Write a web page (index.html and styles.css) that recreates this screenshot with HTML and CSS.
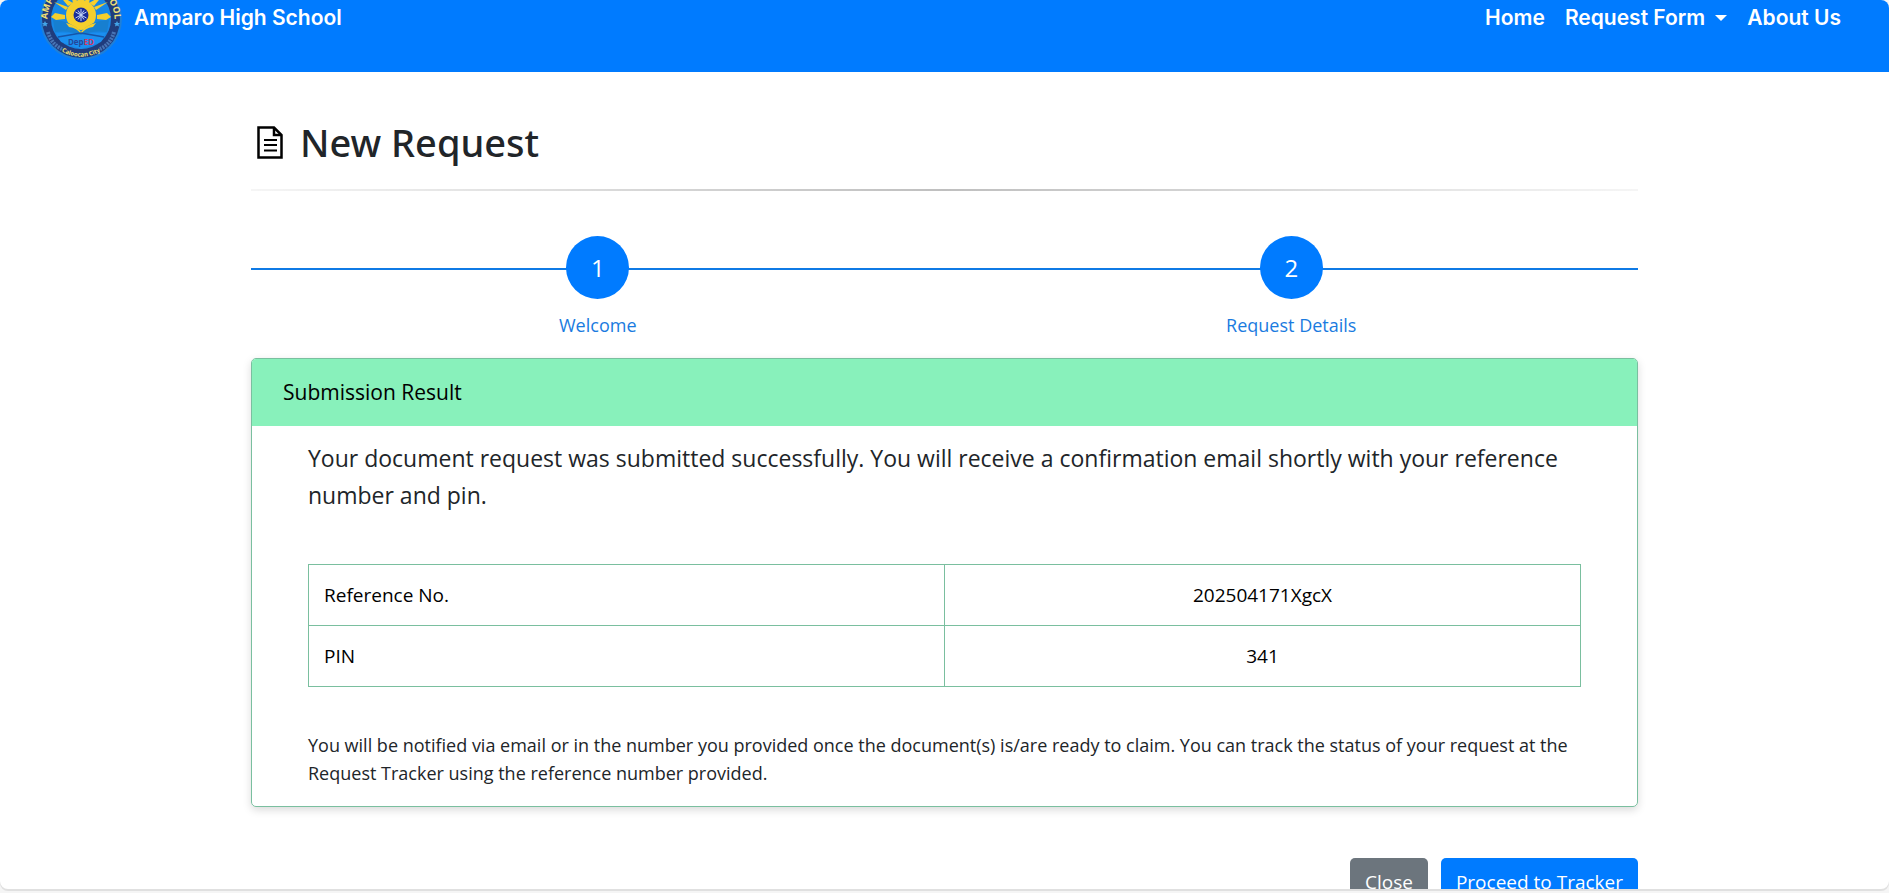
FILE: index.html
```html
<!DOCTYPE html>
<html lang="en">
<head>
<meta charset="utf-8">
<title>New Request - Amparo High School</title>
<link rel="stylesheet" href="styles.css">
</head>
<body>
<div class="window">
  <header class="navbar">
    <a class="brand" href="#">
      <svg class="brand-logo" viewBox="0 0 84 84" aria-hidden="true">
        <defs>
          <path id="ring-top" d="M9.500 51.500 A33.500 33.500 0 1 1 74.500 51.500"/>
          <path id="ring-bottom" d="M12 66 A38 38 0 0 0 72 66"/>
        </defs>
        <circle cx="42" cy="43" r="41" fill="#1f80d8"/>
        <circle cx="42" cy="43" r="39" fill="#203c7c"/>
        <circle cx="42" cy="43" r="30" fill="#1787e6"/>
        <g fill="#f6cf2c">
          <path d="M39 25 42 11 45 25ZM34 27 31 14 38 25ZM50 27 53 14 46 25ZM29 30 20 19 34 27ZM55 30 64 19 50 27ZM27 34 15 26 29 31ZM57 34 69 26 55 31Z"/>
          <path d="M26 39 16 37 12 41 17 44 26 43ZM58 39 68 37 72 41 67 44 58 43ZM26 47 19 51 29 49ZM58 47 65 51 55 49Z"/>
          <circle cx="42" cy="39" r="15"/>
        </g>
        <path d="M14 44Q31 44 42 56Q53 44 70 44L68 56Q54 54 42 59Q30 54 16 56Z" fill="#177fd0"/>
        <path d="M27 47Q37 49 42 56Q47 49 57 47L54 51Q46 52 42 58Q38 52 30 51Z" fill="#f6cf2c"/>
        <path d="M17 57Q31 56 42 59Q53 56 67 57L62 66 42 73 22 66Z" fill="#1b8ff0"/>
        <path d="M19 61 42 57 65 61" fill="none" stroke="#1655a8" stroke-width="1.500"/>
        <circle cx="42" cy="39" r="7.500" fill="#182c99"/>
        <path d="M42 33v12M36.500 36l11 6M47.500 36l-11 6M39 34.500l6 9M45 34.500l-6 9" stroke="#c4d5f6" stroke-width="1"/>
        <path d="M9 56Q12 68 23 73M75 56Q72 68 61 73" fill="none" stroke="#4874b4" stroke-width="4" stroke-dasharray="2 1"/>
        <path d="m6 45 1 2 2 0-1.500 1.500.5 2-2-1-2 1 .5-2L3 47l2 0ZM78 45l1 2 2 0-1.500 1.500.5 2-2-1-2 1 .5-2L75 47l2 0Z" fill="#43a4e8"/>
        <text class="logo-ring" text-anchor="middle"><textPath href="#ring-top" startOffset="50%">AMPARO HIGH SCHOOL</textPath></text>
        <text class="logo-city" text-anchor="middle"><textPath href="#ring-bottom" startOffset="50%">Caloocan City</textPath></text>
        <text class="logo-dep" x="42" y="69" text-anchor="middle"><tspan fill="#24479b">Dep</tspan><tspan fill="#cc365e">ED</tspan></text>
      </svg>
      <span>Amparo High School</span>
    </a>
    <nav class="nav">
      <a href="#">Home</a>
      <a class="dropdown" href="#">Request Form</a>
      <a href="#">About Us</a>
    </nav>
  </header>

  <main class="container">
    <h1 class="page-title">
      <svg class="title-icon" viewBox="0 0 26 33" aria-hidden="true">
        <path d="M1.500 1.500H17L24.500 9V31.500H1.500Z" fill="none" stroke="#000" stroke-width="2.500"/>
        <path d="M17 2V9H24" fill="none" stroke="#000" stroke-width="2.500"/>
        <path d="M7 14H20M7 19H20M7 24.500H20" stroke="#000" stroke-width="2"/>
      </svg>
      New Request
    </h1>
    <hr class="rule">

    <ol class="steps">
      <li class="step"><span class="step-number">1</span><span class="step-label">Welcome</span></li>
      <li class="step"><span class="step-number">2</span><span class="step-label">Request Details</span></li>
    </ol>

    <section class="card">
      <h2 class="card-header">Submission Result</h2>
      <div class="card-body">
        <p class="lead">Your document request was submitted successfully. You will receive a confirmation email shortly with your reference number and pin.</p>
        <table class="result">
          <tbody>
            <tr><th scope="row">Reference No.</th><td>202504171XgcX</td></tr>
            <tr><th scope="row">PIN</th><td>341</td></tr>
          </tbody>
        </table>
        <p class="note">You will be notified via email or in the number you provided once the document(s) is/are ready to claim. You can track the status of your request at the Request Tracker using the reference number provided.</p>
      </div>
    </section>

    <div class="actions">
      <button class="btn btn-secondary" type="button">Close</button>
      <button class="btn btn-primary" type="button">Proceed to Tracker</button>
    </div>
  </main>
</div>
</body>
</html>
```

FILE: styles.css
```css
* {
  box-sizing: border-box;
}

body {
  margin: 0;
  height: 100vh;
  padding-bottom: 4px;
  overflow: hidden;
  background: #f5f5f5;
  color: #212529;
  font-family: "Open Sans", "Noto Sans", sans-serif;
  font-size: 18px;
  line-height: 28px;
}

.window {
  height: 100%;
  overflow: hidden;
  background: #fff;
  border-radius: 8px;
  box-shadow: 0 2px 0 #e0e0e0;
}

/* The bar is partly scrolled out of the window */
.navbar {
  display: flex;
  align-items: center;
  justify-content: space-between;
  height: 108px;
  margin-top: -36px;
  padding: 0 48px 0 39px;
  background: #007bff;
  font-family: Inter, "Open Sans", sans-serif;
  font-size: 21px;
  font-weight: 600;
}

.navbar a {
  color: #fff;
  text-decoration: none;
}

.brand {
  display: flex;
  align-items: center;
  gap: 11px;
}

.brand-logo {
  width: 84px;
  height: 84px;
}

.logo-ring {
  font: 700 9px "Open Sans", sans-serif;
  fill: #f3e277;
}

.logo-city {
  font: 700 6px "Open Sans", sans-serif;
  fill: #f3e277;
}

.logo-dep {
  font: 700 8px "Open Sans", sans-serif;
}

.nav {
  display: flex;
  gap: 20px;
}

.dropdown::after {
  content: "";
  display: inline-block;
  margin-left: 10px;
  vertical-align: 4px;
  border: 6px solid transparent;
  border-top-color: #fff;
  border-bottom: 0;
}

.container {
  max-width: 1387px;
  margin: 0 auto;
}

.page-title {
  display: flex;
  align-items: center;
  gap: 17px;
  margin: 0;
  padding: 46px 6px 23px;
  font-family: "Noto Sans", "Open Sans", sans-serif;
  font-size: 38px;
  font-weight: 500;
  line-height: 48px;
}

.title-icon {
  width: 26px;
  height: 33px;
}

.rule {
  height: 2px;
  margin: 0 0 45px;
  border: 0;
  background: linear-gradient(to right, rgba(0, 0, 0, 0.04), rgba(0, 0, 0, 0.25), rgba(0, 0, 0, 0.04));
}

.steps {
  display: flex;
  margin: 0;
  padding: 0 0 19px;
  list-style: none;
  color: #007bff;
  background: linear-gradient(#0f7ae5, #0f7ae5) 0 32px / 100% 2px no-repeat;
}

.step {
  flex: 1;
  display: flex;
  flex-direction: column;
  align-items: center;
  gap: 12px;
}

.step-number {
  display: grid;
  place-items: center;
  width: 63px;
  height: 63px;
  border-radius: 50%;
  background: #007bff;
  color: #fff;
  font-size: 24px;
}

.step-label {
  color: #1a7be0;
}

.card {
  border: 1px solid #7abf9f;
  border-radius: 5px;
  box-shadow: 0 3px 8px rgba(0, 0, 0, 0.15);
  overflow: hidden;
}

.card-header {
  margin: 0;
  padding: 20px 31px;
  background: #88f1bb;
  color: #000;
  font-size: 21px;
  font-weight: 400;
  line-height: 27px;
}

.card-body {
  padding: 14px 56px 19px;
}

.lead {
  margin: 0 0 50px;
  font-size: 23px;
  line-height: 37px;
}

.result {
  width: 100%;
  margin-bottom: 44px;
  border-collapse: collapse;
  table-layout: fixed;
  color: #000;
  font-size: 19px;
}

.result th,
.result td {
  padding: 16px 15px;
  border: 1px solid #7abf9f;
  font-weight: 400;
  text-align: center;
}

.result th {
  text-align: left;
}

.note {
  margin: 0;
}

.actions {
  display: flex;
  justify-content: flex-end;
  gap: 13px;
  margin-top: 51px;
}

.btn {
  padding: 10px 15px;
  border: 0;
  border-radius: 5px;
  color: #fff;
  font: inherit;
  font-size: 19px;
}

.btn-secondary {
  background: #6c757d;
}

.btn-primary {
  background: #007bff;
}
```
